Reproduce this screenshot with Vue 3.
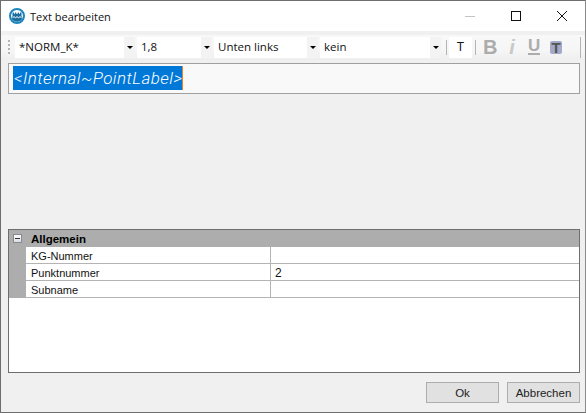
<template>
  <div class="window">
    <div class="titlebar">
      <svg class="app-icon" width="16" height="16" viewBox="0 0 16 16">
        <circle cx="8" cy="8" r="7" fill="#fff" stroke="#1a86bd" stroke-width="2" />
        <path d="M3.500 4.500h1.500v1.200h1V4.500h1.200v1.200h1.600V4.500H10v1.200h1V4.500h1.500v4l.7.500v2l-1.700 1.800c-1 .7-2.200 1-3.500 1s-2.500-.3-3.500-1L2.800 11V9l.7-.5z" fill="#1a6f9f" />
        <path d="M3.500 9.700l1.500-1 1.500 1 1.500-1 1.500 1 1.500-1 1.500 1" stroke="#fff" stroke-width="1" fill="none" />
      </svg>
      <span class="title">Text bearbeiten</span>
      <div class="caption-buttons">
        <svg width="46" height="31" viewBox="0 0 46 31"><path d="M18 15.500h10" stroke="#c4c4c4" fill="none" /></svg>
        <svg width="46" height="31" viewBox="0 0 46 31"><rect x="18.500" y="10.500" width="9" height="9" stroke="#111" fill="none" /></svg>
        <svg width="46" height="31" viewBox="0 0 46 31"><path d="M18 10l10 10M28 10L18 20" stroke="#111" fill="none" /></svg>
      </div>
    </div>

    <div class="toolbar">
      <div class="grip"></div>
      <div v-for="c in combos" :key="c.text" class="combo" :style="{ width: c.width + 'px' }">
        <span class="combo-text">{{ c.text }}</span>
        <span class="combo-arrow"><i></i></span>
      </div>
      <div class="sep first"></div>
      <div class="t-button">T</div>
      <div class="sep"></div>
      <span class="tool bold">B</span>
      <span class="tool italic">i</span>
      <span class="tool underline">U</span>
      <span class="tool highlighted">T</span>
      <div class="sep last"></div>
    </div>

    <div class="editor">
      <span class="selection">&lt;Internal~PointLabel&gt;</span>
    </div>

    <div class="spacer"></div>

    <div class="grid">
      <div class="group">
        <span class="expander"></span>
        <span class="group-name">Allgemein</span>
      </div>
      <div v-for="r in rows" :key="r.name" class="row">
        <div class="gutter"></div>
        <div class="name">{{ r.name }}</div>
        <div class="value">{{ r.value }}</div>
      </div>
    </div>

    <div class="footer">
      <button class="btn">Ok</button>
      <button class="btn">Abbrechen</button>
    </div>
  </div>
</template>

<script setup>
const combos = [
  { text: '*NORM_K*', width: 120 },
  { text: '1,8', width: 75 },
  { text: 'Unten links', width: 104 },
  { text: 'kein', width: 121 }
]

const rows = [
  { name: 'KG-Nummer', value: '' },
  { name: 'Punktnummer', value: '2' },
  { name: 'Subname', value: '' }
]
</script>

<style>
html,
body {
  margin: 0;
  overflow: hidden;
}
</style>

<style scoped>
.window {
  width: 586px;
  height: 413px;
  box-sizing: border-box;
  border: 1px solid #6e6e6e;
  border-right-color: #8a8a8a;
  background: #f0f0f0;
  display: flex;
  flex-direction: column;
  font-family: "Liberation Sans", Arial, sans-serif;
  font-size: 11px;
  color: #000;
}

.titlebar {
  height: 30px;
  flex: none;
  background: #fff;
  display: flex;
  align-items: center;
  padding-left: 8px;
}

.app-icon {
  flex: none;
}

.title {
  margin-left: 5px;
  font-family: "Open Sans", "Noto Sans", sans-serif;
  font-size: 11px;
  color: #111;
}

.caption-buttons {
  margin-left: auto;
  display: flex;
}

.caption-buttons svg {
  display: block;
}

.toolbar {
  height: 25px;
  flex: none;
  margin-top: 4px;
  background: linear-gradient(#f8f8f8, #f6f6f6 60%, #eeeeee);
  display: flex;
  align-items: center;
  padding-left: 7px;
  box-sizing: border-box;
}

.grip {
  width: 2px;
  height: 16px;
  margin-right: 5px;
  flex: none;
  background: repeating-linear-gradient(#b4b4b4 0 2px, transparent 2px 4px);
}

.combo {
  height: 21px;
  flex: none;
  display: flex;
  margin-right: 2px;
  background: #fff;
  box-sizing: border-box;
}

.combo-text {
  flex: 1;
  padding-left: 4px;
  line-height: 20px;
  font-family: "Open Sans", "Noto Sans", sans-serif;
  font-size: 11.500px;
  color: #111;
}

.combo-arrow {
  width: 11px;
  background: #f3f3f3;
  display: flex;
  align-items: center;
  justify-content: center;
}

.combo-arrow i {
  width: 0;
  height: 0;
  border-left: 3px solid transparent;
  border-right: 3px solid transparent;
  border-top: 3px solid #000;
}

.sep {
  width: 1px;
  height: 15px;
  flex: none;
  background: #b4b4b4;
}

.sep.first {
  margin-left: 3px;
}

.sep.last {
  margin-left: 18px;
  height: 21px;
}

.t-button {
  width: 23px;
  height: 21px;
  flex: none;
  margin: 0 3px 0 2px;
  background: #fff;
  text-align: center;
  line-height: 21px;
  font-size: 12px;
  color: #111;
}

.tool {
  flex: none;
  text-align: center;
  font-weight: 700;
  color: #acacac;
  margin-bottom: 2px;
}

.bold {
  width: 14px;
  margin-left: 7px;
  font-size: 20px;
  line-height: 20px;
}

.italic {
  width: 10px;
  margin-left: 10px;
  font-size: 20px;
  line-height: 20px;
  font-style: italic;
  font-weight: 700;
  color: #c8c8c8;
}

.underline {
  width: 12px;
  margin-left: 11px;
  font-size: 17px;
  line-height: 15px;
  border-bottom: 2px solid #acacac;
}

.highlighted {
  width: 12px;
  height: 13px;
  margin-left: 10px;
  margin-bottom: 0;
  background: #a3a9c6;
  border-radius: 2px;
  font-size: 15px;
  line-height: 14px;
  color: #555;
}

.editor {
  height: 31px;
  flex: none;
  margin: 3px 5px 0 7px;
  box-sizing: border-box;
  border: 1px solid #a0a0a0;
  background: #f9f9f9;
  padding: 2px 4px;
}

.selection {
  display: inline-block;
  height: 24px;
  line-height: 25px;
  padding-left: 1px;
  background: #0078d7;
  border-right: 1px solid #f08020;
  color: #fff;
  font-family: Roboto, sans-serif;
  font-weight: 300;
  font-style: italic;
  font-size: 17px;
  letter-spacing: 0.45px;
  white-space: nowrap;
}

.spacer {
  flex: 1;
}

.grid {
  height: 144px;
  flex: none;
  margin: 0 5px 0 7px;
  box-sizing: border-box;
  border: 1px solid #6e6e6e;
  background: #fff;
}

.group {
  height: 17px;
  background: #adadad;
  display: flex;
  align-items: center;
  padding-left: 4px;
}

.expander {
  width: 9px;
  height: 9px;
  box-sizing: border-box;
  border: 1px solid #8a8a8a;
  background: linear-gradient(#fff, #d8dce8);
  position: relative;
}

.expander::after {
  content: "";
  position: absolute;
  left: 1px;
  top: 3px;
  width: 5px;
  height: 1px;
  background: #333;
}

.group-name {
  margin-left: 9px;
  font-weight: 700;
  font-size: 11.500px;
  color: #000;
}

.row {
  height: 17px;
  display: flex;
  line-height: 18px;
  color: #111;
}

.gutter {
  width: 17px;
  flex: none;
  background: #adadad;
}

.name {
  width: 245px;
  flex: none;
  padding-left: 5px;
  box-sizing: border-box;
  border-right: 1px solid #b4b4b4;
  border-bottom: 1px solid #b4b4b4;
}

.value {
  flex: 1;
  padding-left: 4px;
  border-bottom: 1px solid #b4b4b4;
  font-size: 12px;
}

.footer {
  height: 39px;
  flex: none;
  display: flex;
  justify-content: flex-end;
  gap: 8px;
  padding: 9px 5px 0 0;
  box-sizing: border-box;
}

.btn {
  width: 73px;
  height: 21px;
  box-sizing: border-box;
  border: 1px solid #adadad;
  background: #e1e1e1;
  font-family: "Liberation Sans", Arial, sans-serif;
  font-size: 11.500px;
  color: #222;
  padding: 0;
}
</style>
